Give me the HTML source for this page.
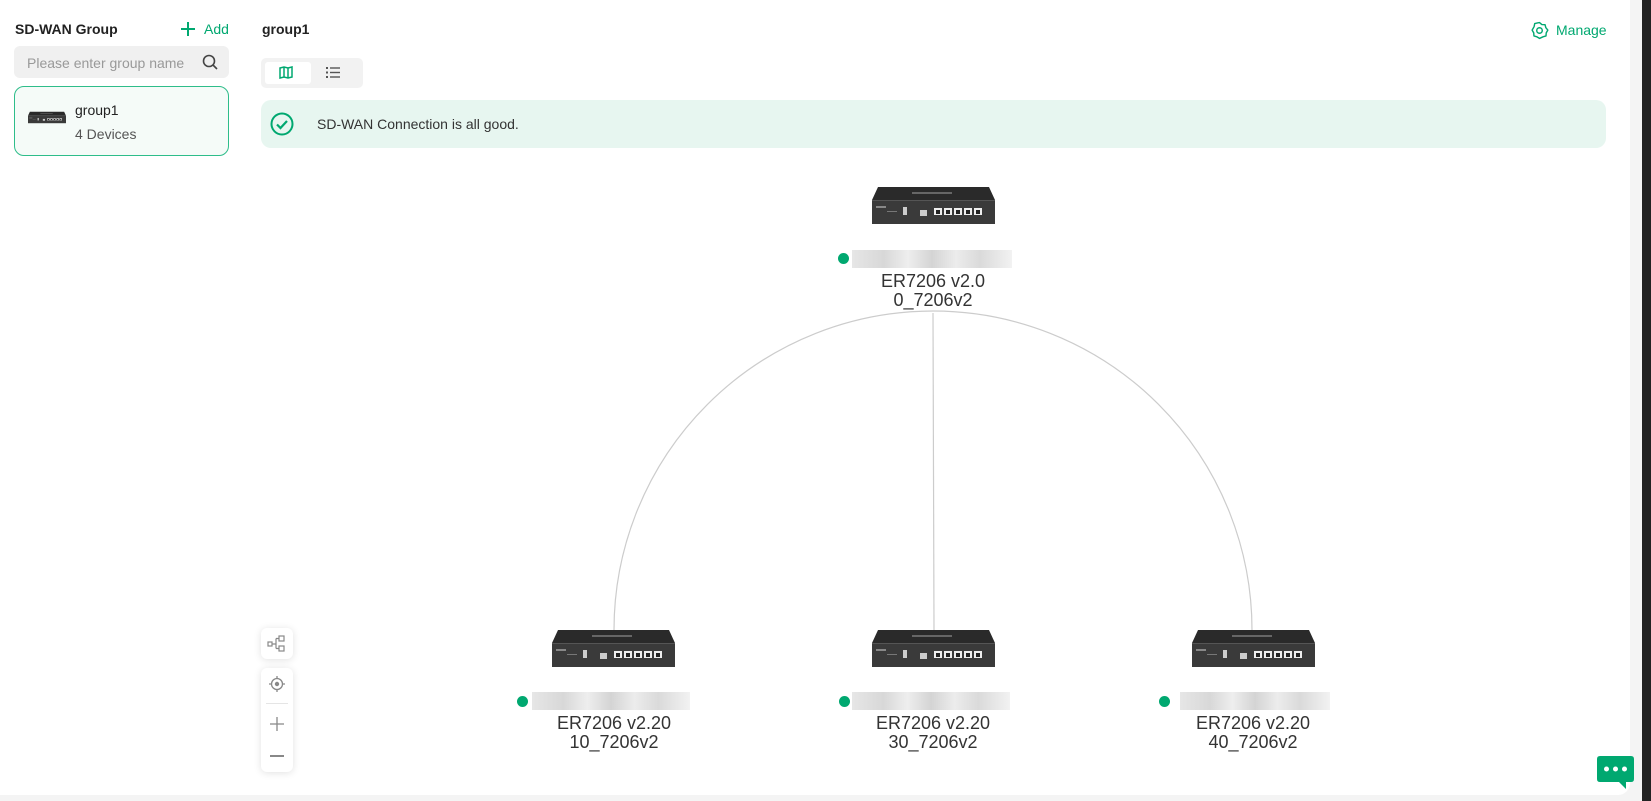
<!DOCTYPE html>
<html><head><meta charset="utf-8"><style>
*{margin:0;padding:0;box-sizing:border-box}
body{width:1651px;height:801px;overflow:hidden;background:#f4f4f4;font-family:"Liberation Sans",Arial,sans-serif;position:relative}
.main{position:absolute;left:0;top:0;width:1630px;height:795px;background:#fff;border-bottom-right-radius:12px}
.dark{position:absolute;left:1642px;top:0;width:9px;height:801px;background:#222}
.abs{position:absolute}
.t{font-weight:bold;font-size:14px;color:#222}
.lbl{position:absolute;width:200px;text-align:center;font-size:18px;color:#333;line-height:19px}
.blur{position:absolute;height:18px;background:linear-gradient(90deg,#e6e6e6,#d8d8d8 20%,#eee 35%,#d4d4d4 50%,#ececec 65%,#dadada 80%,#f2f2f2)}
.dot{position:absolute;width:11px;height:11px;border-radius:50%;background:#00a870}
</style></head><body>
<div class="main"></div>
<div class="dark"></div>
<svg width="0" height="0" style="position:absolute"><defs>
<symbol id="dev" viewBox="0 0 123 37">
<path d="M6 0H117L123 13H0Z" fill="#2a2a2a"/>
<rect x="0" y="13" width="123" height="24" fill="#3a3a3a"/>
<rect x="0" y="13" width="123" height="1" fill="#555"/>
<rect x="31" y="20" width="4" height="8" fill="#ccc"/>
<rect x="48" y="23" width="7" height="6" fill="#ccc"/>
<g fill="#eee"><rect x="62" y="21" width="8" height="7"/><rect x="72" y="21" width="8" height="7"/><rect x="82" y="21" width="8" height="7"/><rect x="92" y="21" width="8" height="7"/><rect x="102" y="21" width="8" height="7"/></g>
<g fill="#222"><rect x="64" y="23" width="4" height="4"/><rect x="74" y="23" width="4" height="4"/><rect x="84" y="23" width="4" height="4"/><rect x="94" y="23" width="4" height="4"/><rect x="104" y="23" width="4" height="4"/></g>
<rect x="4" y="19" width="10" height="2" fill="#888"/><rect x="15" y="24" width="10" height="1" fill="#777"/>
<rect x="40" y="5" width="40" height="2" fill="#666"/>
</symbol></defs></svg>

<div class="abs t" style="left:15px;top:21px">SD-WAN Group</div>
<svg class="abs" style="left:181px;top:22px" width="14" height="14"><path d="M7 0V14M0 7H14" stroke="#00a870" stroke-width="2"/></svg>
<div class="abs" style="left:204px;top:21px;font-size:14px;color:#00a870">Add</div>
<div class="abs" style="left:14px;top:46px;width:215px;height:32px;background:#f0f0f0;border-radius:6px"></div>
<div class="abs" style="left:27px;top:55px;font-size:14px;color:#999">Please enter group name</div>
<svg class="abs" style="left:202px;top:54px" width="16" height="16"><circle cx="7" cy="7" r="5.5" fill="none" stroke="#444" stroke-width="1.6"/><path d="M11 11L15 15" stroke="#444" stroke-width="1.6"/></svg>
<div class="abs" style="left:14px;top:86px;width:215px;height:70px;border:1px solid #2ebd8a;border-radius:10px;background:#f5fbf8"></div>
<svg class="abs" style="left:28px;top:111px" width="38" height="13"><use href="#dev"/></svg>
<div class="abs" style="left:75px;top:102px;font-size:14px;color:#222">group1</div>
<div class="abs" style="left:75px;top:126px;font-size:14px;color:#555">4 Devices</div>

<div class="abs t" style="left:262px;top:21px">group1</div>
<svg class="abs" style="left:1530px;top:21px" width="19" height="19" viewBox="0 0 24 24"><path d="M12 2l3 2.5 4 .2 1 3.8 2.5 3-2 3.5-.3 3.8-3.8 1.2L12 22l-3.2-2-3.8-1.2-.3-3.8-2-3.5L5.2 7 6 3.2l3.4-.7z" fill="none" stroke="#00a870" stroke-width="1.8" stroke-linejoin="round"/><circle cx="12" cy="12" r="3.5" fill="none" stroke="#00a870" stroke-width="1.8"/></svg>
<div class="abs" style="left:1556px;top:22px;font-size:14px;color:#00a870">Manage</div>

<div class="abs" style="left:261px;top:58px;width:102px;height:30px;background:#f2f2f2;border-radius:5px"></div>
<div class="abs" style="left:265px;top:62px;width:46px;height:22px;background:#fff;border-radius:3px"></div>
<svg class="abs" style="left:279px;top:66px" width="14" height="13"><path d="M1 2L5 1L9 2L13 1V11L9 12L5 11L1 12Z M5 1V11 M9 2V12" fill="none" stroke="#00a870" stroke-width="1.5"/></svg>
<svg class="abs" style="left:326px;top:66px" width="15" height="13"><g fill="#555"><rect x="0" y="1" width="2" height="2"/><rect x="0" y="5.5" width="2" height="2"/><rect x="0" y="10" width="2" height="2"/><rect x="4" y="1.3" width="10" height="1.4"/><rect x="4" y="5.8" width="10" height="1.4"/><rect x="4" y="10.3" width="10" height="1.4"/></g></svg>

<div class="abs" style="left:261px;top:100px;width:1345px;height:48px;background:#e7f6f0;border-radius:10px"></div>
<svg class="abs" style="left:270px;top:112px" width="24" height="24"><circle cx="12" cy="12" r="10.5" fill="none" stroke="#00a870" stroke-width="2"/><path d="M7 12.5L10.5 16L17 9" fill="none" stroke="#00a870" stroke-width="2.2"/></svg>
<div class="abs" style="left:317px;top:116px;font-size:14px;color:#333">SD-WAN Connection is all good.</div>

<svg class="abs" style="left:0;top:0" width="1630" height="795">
<path d="M614 630A319 319 0 0 1 1252 630" fill="none" stroke="#ccc" stroke-width="1.2"/>
<path d="M933 313L934 630" stroke="#ccc" stroke-width="1.2"/>
</svg>
<svg class="abs" style="left:872px;top:187px" width="123" height="37"><use href="#dev"/></svg>
<svg class="abs" style="left:552px;top:630px" width="123" height="37"><use href="#dev"/></svg>
<svg class="abs" style="left:872px;top:630px" width="123" height="37"><use href="#dev"/></svg>
<svg class="abs" style="left:1192px;top:630px" width="123" height="37"><use href="#dev"/></svg>

<div class="dot" style="left:838px;top:253px"></div><div class="blur" style="left:852px;top:250px;width:160px"></div>
<div class="lbl" style="left:833px;top:272px">ER7206 v2.0</div>
<div class="lbl" style="left:833px;top:291px">0_7206v2</div>

<div class="dot" style="left:517px;top:696px"></div><div class="blur" style="left:532px;top:692px;width:158px"></div>
<div class="lbl" style="left:514px;top:714px">ER7206 v2.20</div>
<div class="lbl" style="left:514px;top:733px">10_7206v2</div>

<div class="dot" style="left:839px;top:696px"></div><div class="blur" style="left:852px;top:692px;width:158px"></div>
<div class="lbl" style="left:833px;top:714px">ER7206 v2.20</div>
<div class="lbl" style="left:833px;top:733px">30_7206v2</div>

<div class="dot" style="left:1159px;top:696px"></div><div class="blur" style="left:1180px;top:692px;width:150px"></div>
<div class="lbl" style="left:1153px;top:714px">ER7206 v2.20</div>
<div class="lbl" style="left:1153px;top:733px">40_7206v2</div>

<div class="abs" style="left:261px;top:628px;width:32px;height:31px;background:#fff;border-radius:6px;box-shadow:0 1px 8px rgba(0,0,0,.12)"></div>
<svg class="abs" style="left:267px;top:635px" width="20" height="18"><g fill="none" stroke="#888" stroke-width="1.2"><rect x="1" y="7" width="4" height="4"/><rect x="12" y="1" width="5" height="5"/><rect x="12" y="11" width="5" height="5"/><path d="M5 9H9M9 3.5V13.5M9 3.5H12M9 13.5H12"/></g></svg>
<div class="abs" style="left:261px;top:668px;width:32px;height:104px;background:#fff;border-radius:6px;box-shadow:0 1px 8px rgba(0,0,0,.12)"></div>
<svg class="abs" style="left:268px;top:675px" width="18" height="18"><circle cx="9" cy="9" r="5.5" fill="none" stroke="#888" stroke-width="1.3"/><circle cx="9" cy="9" r="2.2" fill="#888"/><path d="M9 1V3.5M9 14.5V17M1 9H3.5M14.5 9H17" stroke="#888" stroke-width="1.3"/></svg>
<div class="abs" style="left:266px;top:703px;width:22px;height:1px;background:#e5e5e5"></div>
<svg class="abs" style="left:270px;top:717px" width="14" height="14"><path d="M7 0V14M0 7H14" stroke="#888" stroke-width="1.3"/></svg>
<div class="abs" style="left:270px;top:755px;width:14px;height:1.5px;background:#888"></div>

<svg class="abs" style="left:1597px;top:756px" width="37" height="44"><path d="M3 0H34Q37 0 37 3V23Q37 26 34 26H29V33L22 26H3Q0 26 0 23V3Q0 0 3 0Z" fill="#00a870"/><circle cx="9.5" cy="13" r="2.5" fill="#fff"/><circle cx="18.5" cy="13" r="2.5" fill="#fff"/><circle cx="27.5" cy="13" r="2.5" fill="#fff"/></svg>
</body></html>
